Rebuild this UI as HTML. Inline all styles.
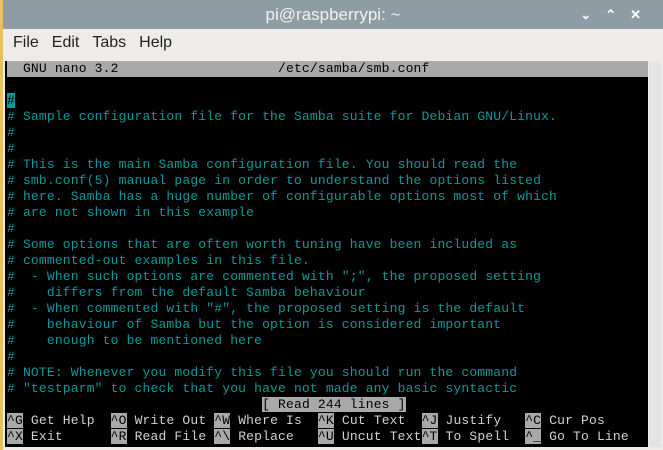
<!DOCTYPE html>
<html><head><style>
body{margin:0;width:663px;height:450px;overflow:hidden;background:#e8c060;position:relative;font-family:"Liberation Sans",sans-serif}
#win{position:absolute;left:3px;top:0;width:660px;height:450px;background:#edeceb}
#title{position:absolute;left:0;top:0;width:660px;height:29px;background:#8e9ca3;color:#f0f3f4;font-size:17px;text-align:center;line-height:29px}
#ctl{position:absolute;right:8px;top:0;color:#fff;font-size:13px;line-height:29px;letter-spacing:14px;font-weight:bold}
#menu{position:absolute;left:10px;top:34px;font-size:16px;color:#222}
#menu span{margin-right:13px}
#term{position:absolute;left:2px;top:61px;width:643px;height:386px;background:#000;overflow:hidden}
#sb{position:absolute;left:646px;top:61px;width:12px;height:386px;background:#e4e4e4}
.t{position:absolute;left:2px;top:0;font-family:"Liberation Mono",monospace;font-size:13px;color:#0a9a9c;letter-spacing:0.17px}
.t div{height:16px;line-height:16px;white-space:pre}
.hd{background:#a9a9a9;color:#000;width:641px}
.inv{background:#a9a9a9;color:#000}
.w{color:#d0d0d0}
.cur{background:#0a9a9c;color:#000}
</style></head><body>
<div id="win">
<div id="title">pi@raspberrypi: ~<div id="ctl">⌄⌃✕</div></div>
<div id="menu"><span>File</span><span>Edit</span><span>Tabs</span><span>Help</span></div>
<div id="term"><div class="t">
<div class="hd">  GNU nano 3.2                    /etc/samba/smb.conf</div>
<div> </div>
<div><span class="cur">#</span></div>
<div># Sample configuration file for the Samba suite for Debian GNU/Linux.</div>
<div>#</div>
<div>#</div>
<div># This is the main Samba configuration file. You should read the</div>
<div># smb.conf(5) manual page in order to understand the options listed</div>
<div># here. Samba has a huge number of configurable options most of which</div>
<div># are not shown in this example</div>
<div>#</div>
<div># Some options that are often worth tuning have been included as</div>
<div># commented-out examples in this file.</div>
<div>#  - When such options are commented with ";", the proposed setting</div>
<div>#    differs from the default Samba behaviour</div>
<div>#  - When commented with "#", the proposed setting is the default</div>
<div>#    behaviour of Samba but the option is considered important</div>
<div>#    enough to be mentioned here</div>
<div>#</div>
<div># NOTE: Whenever you modify this file you should run the command</div>
<div># "testparm" to check that you have not made any basic syntactic</div>
<div class="w">                                <span class="inv">[ Read 244 lines ]</span></div>
<div class="w"><span class="inv">^G</span> Get Help  <span class="inv">^O</span> Write Out <span class="inv">^W</span> Where Is  <span class="inv">^K</span> Cut Text  <span class="inv">^J</span> Justify   <span class="inv">^C</span> Cur Pos</div>
<div class="w"><span class="inv">^X</span> Exit      <span class="inv">^R</span> Read File <span class="inv">^\</span> Replace   <span class="inv">^U</span> Uncut Text<span class="inv">^T</span> To Spell  <span class="inv">^_</span> Go To Line</div>
</div></div>
<div id="sb"></div>
</div>
</body></html>
